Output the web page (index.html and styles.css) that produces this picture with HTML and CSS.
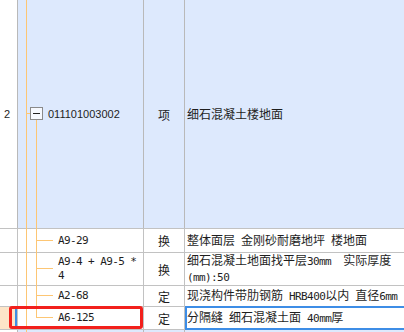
FILE: index.html
```html
<!DOCTYPE html>
<html lang="zh">
<head>
<meta charset="utf-8">
<link rel="stylesheet" href="styles.css">
</head>
<body>
<div class="sheet">
  <div class="row row-parent">
    <div class="cell num">2</div>
    <div class="cell code">
      <span class="tv tv-root"></span>
      <span class="stub"></span>
      <span class="toggle"><span class="minus"></span></span>
      <span class="tv tv-kids"></span>
      <span class="code-main">011101003002</span>
    </div>
    <div class="cell type">项</div>
    <div class="cell desc">细石混凝土楼地面</div>
  </div>

  <div class="row row-a">
    <div class="cell num"></div>
    <div class="cell code child">
      <span class="tv tv-root"></span>
      <span class="tv tv-sib"></span>
      <span class="branch"></span>
      <span class="code-sub">A9-29</span>
    </div>
    <div class="cell type">换</div>
    <div class="cell desc"><span class="txt">整体面层<span class="lat"> </span>金刚砂耐磨地坪<span class="lat"> </span>楼地面</span></div>
  </div>

  <div class="row row-b">
    <div class="cell num"></div>
    <div class="cell code child">
      <span class="tv tv-root"></span>
      <span class="tv tv-sib"></span>
      <span class="branch"></span>
      <span class="code-sub">A9-4 + A9-5 *<br>4</span>
    </div>
    <div class="cell type">换</div>
    <div class="cell desc"><span class="txt">细石混凝土地面找平层<span class="lat">30mm&nbsp;&nbsp;</span>实际厚度<br><span class="lat">(mm):50</span></span></div>
  </div>

  <div class="row row-c">
    <div class="cell num"></div>
    <div class="cell code child">
      <span class="tv tv-root"></span>
      <span class="tv tv-sib"></span>
      <span class="branch"></span>
      <span class="code-sub">A2-68</span>
    </div>
    <div class="cell type">定</div>
    <div class="cell desc"><span class="txt">现浇构件带肋钢筋<span class="lat"> HRB400</span>以内<span class="lat"> </span>直径<span class="lat">6mm</span></span></div>
  </div>

  <div class="row row-d">
    <div class="cell num current"></div>
    <div class="cell code child">
      <span class="tv tv-root"></span>
      <span class="tv tv-last"></span>
      <span class="branch"></span>
      <span class="code-sub">A6-125</span>
    </div>
    <div class="cell type">定</div>
    <div class="cell desc editing"><span class="txt">分隔缝<span class="lat"> </span>细石混凝土面<span class="lat"> 40mm</span>厚</span></div>
  </div>

  <div class="row row-next">
    <div class="cell num"></div>
    <div class="cell code"><span class="tv tv-root"></span></div>
    <div class="cell type"></div>
    <div class="cell desc"></div>
  </div>

  <div class="mark"></div>
</div>
</body>
</html>
```

FILE: styles.css
```css
* { box-sizing: border-box; }

body {
  margin: 0;
  background: #ffffff;
  font-family: "Noto Sans CJK SC", "Liberation Sans", sans-serif;
  font-size: 12px;
  color: #1e1e1e;
}

.sheet {
  position: relative;
  width: 404px;
  height: 332px;
  overflow: hidden;
}

.row {
  display: grid;
  grid-template-columns: 18px 126px 41px 1fr;
  border-bottom: 1px solid #c2c2c2;
  background: #ffffff;
}

.row-parent { height: 229px; }
.row-a { height: 24px; }
.row-b { height: 33px; }
.row-c { height: 21px; }
.row-d { height: 23px; }
.row-next { height: 20px; }

.cell {
  position: relative;
  display: flex;
  align-items: center;
  border-right: 1px solid #c2c2c2;
  min-width: 0;
  white-space: nowrap;
}

.row-parent .code,
.row-parent .type,
.row-parent .desc,
.row-next .code,
.row-next .type,
.row-next .desc {
  background: #dde9fd;
}

.row-parent .cell,
.row-next .cell {
  border-right-color: #b9b9b9;
}

.num {
  padding-left: 4px;
  font-family: "Liberation Sans", sans-serif;
  font-size: 11px;
  line-height: 1;
}

.num.current {
  background: #fde5c8;
}

.num.current::after {
  content: "";
  position: absolute;
  right: 0;
  top: 0;
  bottom: 0;
  width: 2px;
  background: #3d8de6;
}

.type {
  justify-content: center;
}

.desc {
  padding-left: 2px;
  border-right: none;
  line-height: 14px;
}

.txt {
  display: block;
  line-height: 14px;
  white-space: pre;
}

.row-b .txt { margin-top: -1px; }

.desc.editing::after {
  content: "";
  position: absolute;
  left: 0;
  top: -1px;
  right: -4px;
  bottom: -1px;
  border: 2px solid #3d8de6;
}

.lat {
  font-family: "DejaVu Sans Mono", monospace;
  font-size: 11px;
  letter-spacing: -0.6px;
}

/* tree connectors */
.tv {
  position: absolute;
  width: 1px;
  background: #fdc674;
}

.tv-root { left: 8px; top: 0; bottom: -1px; }
.tv-sib { left: 18px; top: 0; bottom: -1px; }
.tv-last { left: 18px; top: 0; height: 11px; }
.tv-kids { left: 18px; top: 120px; bottom: -1px; }

.stub {
  position: absolute;
  left: 8px;
  top: 113px;
  width: 4px;
  height: 1px;
  background: #fdc674;
}

.branch {
  position: absolute;
  left: 18px;
  top: 50%;
  margin-top: -1px;
  width: 17px;
  height: 1px;
  background: #fdc674;
}

.toggle {
  position: absolute;
  left: 12px;
  top: 107px;
  width: 13px;
  height: 13px;
  border: 1px solid #8a8a8a;
  background: #f6f9ff;
}

.minus {
  position: absolute;
  left: 2px;
  top: 5px;
  width: 7px;
  height: 1px;
  background: #222222;
}

.code-main {
  margin-left: 30px;
  font-family: "Liberation Sans", sans-serif;
  font-size: 11px;
  line-height: 1;
}

.code-sub {
  margin-left: 40px;
  font-family: "DejaVu Sans Mono", monospace;
  font-size: 11px;
  letter-spacing: -0.6px;
  line-height: 14px;
}

.row-b .code-sub { margin-top: -1px; }

.mark {
  position: absolute;
  left: 9px;
  top: 306px;
  width: 134px;
  height: 23px;
  border: 3px solid #f2201c;
  border-radius: 3px;
}
```
